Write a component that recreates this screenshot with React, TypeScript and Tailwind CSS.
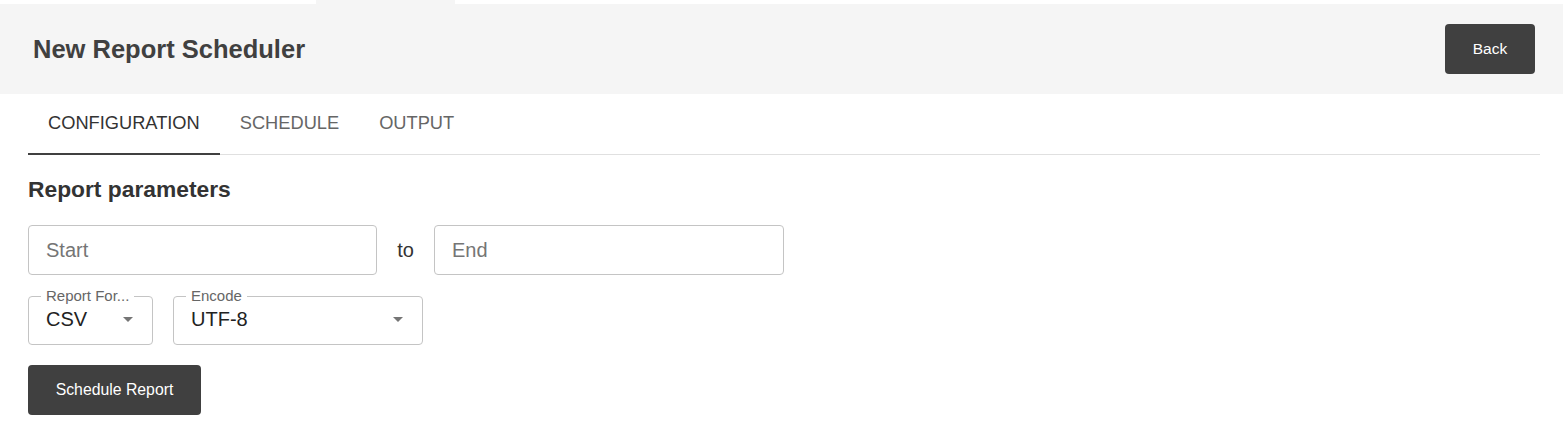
import React, { useState } from 'react';

const font = { fontFamily: '"Liberation Sans", Arial, sans-serif' };

function Caret() {
  return (
    <svg width="10" height="5" viewBox="0 0 10 5" className="fill-[#757575]">
      <path d="M0 0h10L5 5z" />
    </svg>
  );
}

function OutlinedSelect({ label, value, width }: { label: string; value: string; width: string }) {
  return (
    <div className={`relative ${width} h-[49px] border border-[#c4c4c4] rounded-[4px] pl-[17px] pr-[19px] flex items-center justify-between`}>
      <span className="absolute -top-[10px] left-[12px] px-[5px] bg-white text-[15px] leading-[17px] text-[#666]">{label}</span>
      <span className="text-[20px] text-[#222] mt-[-3px]">{value}</span>
      <span className="mt-[-3px]"><Caret /></span>
    </div>
  );
}

export default function App() {
  const [tab, setTab] = useState('CONFIGURATION');
  const tabs = ['CONFIGURATION', 'SCHEDULE', 'OUTPUT'];

  return (
    <div className="w-[1563px] h-[438px] bg-white overflow-hidden" style={font}>
      {/* top strip */}
      <div className="h-[4px] flex">
        <div className="w-[316px]" />
        <div className="w-[139px] bg-[#f5f5f5]" />
      </div>

      {/* Header */}
      <div className="h-[90px] bg-[#f5f5f5] flex items-center justify-between pl-[33px] pr-[28px]">
        <h1 className="text-[25.5px] font-bold text-[#404040]">New Report Scheduler</h1>
        <button className="w-[90px] h-[50px] rounded-[4px] bg-[#404040] text-white text-[15.5px] mt-[-1px]">Back</button>
      </div>

      <div className="pl-[28px] pr-[23px]">
        {/* Tabs */}
        <div className="flex border-b border-[#e0e0e0] h-[61px]">
          {tabs.map(t => (
            <button
              key={t}
              onClick={() => setTab(t)}
              className={`px-[20px] text-[18.25px] border-b-2 -mb-[1px] pb-[1px] ${
                tab === t ? 'border-[#404040] text-[#333]' : 'border-transparent text-[#666]'
              }`}
            >
              {t}
            </button>
          ))}
        </div>

        {/* Content */}
        <h2 className="text-[22.8px] font-bold text-[#333] mt-[21px] leading-[26px]">Report parameters</h2>

        <div className="flex items-center mt-[23px]">
          <input
            placeholder="Start"
            className="w-[349px] h-[50px] border border-[#c4c4c4] rounded-[4px] px-[17px] text-[20px] placeholder:text-[#757575] outline-none"
          />
          <span className="w-[57px] text-center text-[20px] text-[#333]">to</span>
          <input
            placeholder="End"
            className="w-[350px] h-[50px] border border-[#c4c4c4] rounded-[4px] px-[17px] text-[20px] placeholder:text-[#757575] outline-none"
          />
        </div>

        <div className="flex gap-[20px] mt-[21px]">
          <OutlinedSelect label="Report For..." value="CSV" width="w-[125px]" />
          <OutlinedSelect label="Encode" value="UTF-8" width="w-[250px]" />
        </div>

        <button className="mt-[20px] w-[173px] h-[50px] rounded-[4px] bg-[#404040] text-white text-[15.8px]">
          Schedule Report
        </button>
      </div>
    </div>
  );
}
